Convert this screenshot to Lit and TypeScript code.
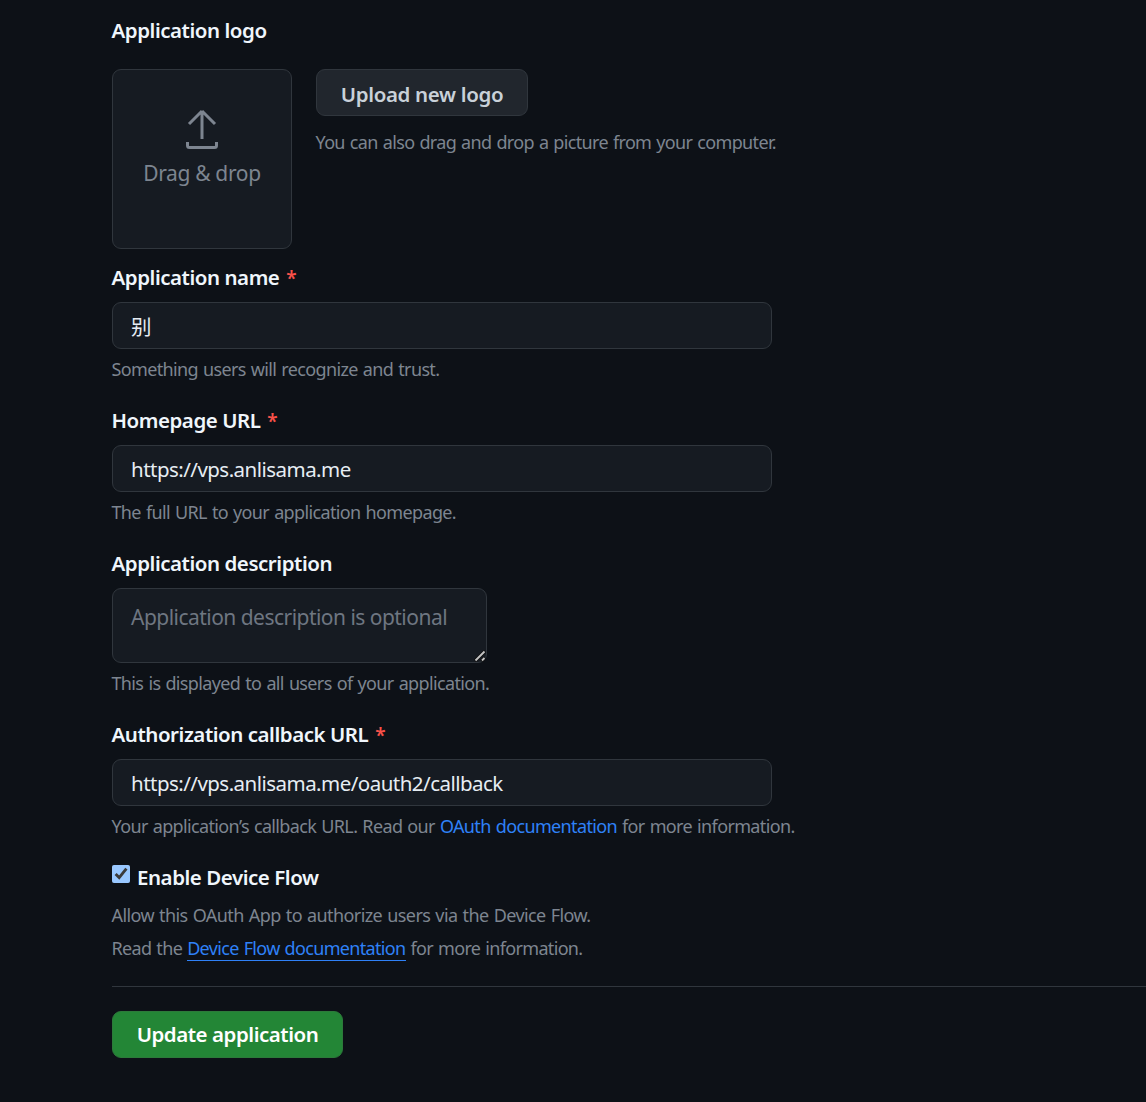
import { LitElement, html, css } from "lit";
import { customElement } from "lit/decorators.js";

@customElement("app-root")
export class AppRoot extends LitElement {
  static styles = css`
    :host {
      display: block;
      min-height: 1102px;
      background: #0d1117;
      color: #e6edf3;
      font-family: "Noto Sans", "Noto Sans CJK SC", sans-serif;
      color-scheme: dark;
      overflow: hidden;
    }
    .form { padding: 15px 0 44px 112px; display: flex; flex-direction: column; }
    .label {
      display: block; font-size: 20.5px; font-weight: 600; line-height: 30px; height: 32px;
      letter-spacing: -0.46px; color: #f0f6fc; margin-bottom: 8px; margin-left: -0.5px;
    }
    .label-top { margin-bottom: 0; }
    .req { color: #f85149; margin-left: 2px; font-size: 19px; }
    .logo-row { display: flex; gap: 24px; margin-top: 22px; margin-bottom: 13px; }
    .logo-box {
      box-sizing: border-box; width: 180px; height: 180px; background: #161b22;
      border: 1px solid #30363d; border-radius: 9px; display: flex; flex-direction: column;
      align-items: center; padding-top: 39px; color: #7d8590; font-size: 21px; line-height: 32px;
      letter-spacing: -0.35px;
    }
    .logo-box svg { display: block; margin-bottom: 8px; }
    .btn {
      box-sizing: border-box; height: 47px; border-radius: 9px; font: inherit; font-size: 20.5px;
      font-weight: 600; letter-spacing: -0.35px; padding: 0; display: block;
    }
    .btn-upload { width: 212px; background: #21262d; border: 1px solid #30363d; color: #c9d1d9; padding-top: 2px; }
    .btn-save { width: 231px; background: #238636; border: 1px solid #2c7a3a; color: #fff; letter-spacing: -0.46px; padding-bottom: 2px; }
    .logo-note { margin: 13px 0 0; }
    .input, .area {
      box-sizing: border-box; display: block; background: #161b22; border: 1px solid #30363d;
      border-radius: 9px; font: inherit; font-size: 20.5px; letter-spacing: -0.53px; color: #e6edf3;
      padding: 0 18px; outline: none; margin: 0;
    }
    .input { width: 660px; height: 47px; }
    .area-wrap { position: relative; width: 375px; height: 75px; }
    .area {
      width: 375px; height: 75px; padding-top: 12px; line-height: 32px; font-size: 21px; resize: none;
    }
    .area::placeholder { color: #6e7681; opacity: 1; }
    .grip { position: absolute; right: 1px; bottom: 1px; display: block; }
    .help {
      font-size: 18px; line-height: 26px; height: 27px; color: #7d8590; letter-spacing: -0.64px;
      word-spacing: 1px; white-space: nowrap; margin-left: -0.5px;
    }
    .field .help { margin-top: 7px; }
    .field { margin-bottom: 22px; }
    a { color: #2f81f7; text-decoration: none; }
    .check-row { display: flex; align-items: center; height: 32px; gap: 7px; }
    .check-row input { width: 18px; height: 18px; margin: 0; position: relative; top: -4px; accent-color: #99c8ff; }
    .check-row .label { margin: 0; }
    .logo-note.help { letter-spacing: -0.66px; }
    .notes.help { margin-top: 5px; height: auto; }
    .notes div { line-height: 33px; }
    .note-a { letter-spacing: -0.59px; }
    .note-b { letter-spacing: -0.67px; }
    .ul { border-bottom: 1px solid #2f81f7; }
    .rule { height: 1px; background: #30363d; border: 0; margin: 21px 0 24px; }
  `;

  private field(label: string, value: string, help: unknown, req = true) {
    return html`<div class="field">
      <label class="label">${label}${req ? html` <span class="req">*</span>` : ""}</label>
      <input class="input" .value=${value} />
      <div class="help">${help}</div>
    </div>`;
  }

  render() {
    return html`<div class="form">
      <div class="label label-top">Application logo</div>
      <div class="logo-row">
        <div class="logo-box">
          <svg width="32" height="40" viewBox="0 0 32 40" fill="none" stroke="currentColor" stroke-width="3">
            <path d="M16 30V2.5M3 15 16 2M29 15 16 2" />
            <path d="M1.5 33v3.5a2 2 0 0 0 2 2h25a2 2 0 0 0 2-2V33" />
          </svg>
          <span>Drag &amp; drop</span>
        </div>
        <div>
          <button class="btn btn-upload">Upload new logo</button>
          <div class="help logo-note">You can also drag and drop a picture from your computer.</div>
        </div>
      </div>
      ${this.field("Application name", "别", "Something users will recognize and trust.")}
      ${this.field("Homepage URL", "https://vps.anlisama.me", "The full URL to your application homepage.")}
      <div class="field">
        <label class="label">Application description</label>
        <div class="area-wrap">
          <textarea class="area" placeholder="Application description is optional"></textarea>
          <svg class="grip" width="12" height="12" viewBox="0 0 12 12" fill="none">
            <path d="M1 11 11 1M7.5 11 11 7.5" stroke="#111" stroke-width="3.4" />
            <path d="M1.5 10.5 10.5 1.5M8 10.5 10.5 8" stroke="#c4c4c4" stroke-width="1.8" />
          </svg>
        </div>
        <div class="help">This is displayed to all users of your application.</div>
      </div>
      ${this.field(
        "Authorization callback URL",
        "https://vps.anlisama.me/oauth2/callback",
        html`Your application’s callback URL. Read our <a href="#">OAuth documentation</a> for more information.`
      )}
      <div class="check-row">
        <input type="checkbox" checked />
        <label class="label">Enable Device Flow</label>
      </div>
      <div class="help notes">
        <div class="note-a">Allow this OAuth App to authorize users via the Device Flow.</div>
        <div class="note-b">Read the <a class="ul" href="#">Device Flow documentation</a> for more information.</div>
      </div>
      <hr class="rule" />
      <button class="btn btn-save">Update application</button>
    </div>`;
  }
}
